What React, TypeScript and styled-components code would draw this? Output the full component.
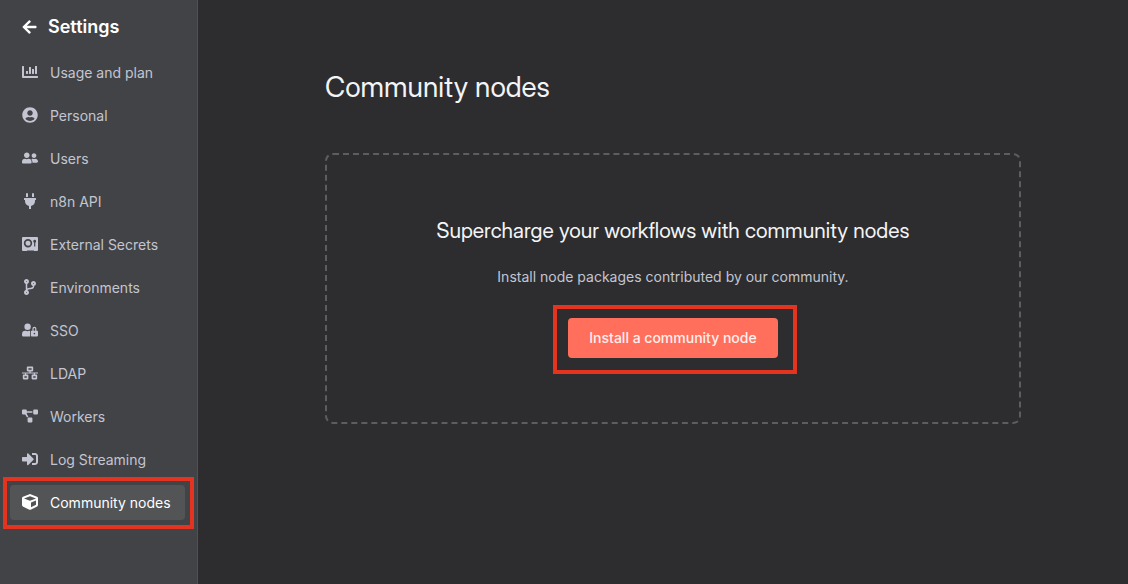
import React from "react";
import styled, { createGlobalStyle, css } from "styled-components";
import type { IconType } from "react-icons";
import {
  FaArrowLeft,
  FaChartBar,
  FaCodeBranch,
  FaCube,
  FaNetworkWired,
  FaPlug,
  FaProjectDiagram,
  FaSignInAlt,
  FaUserCircle,
  FaUserFriends,
  FaUserLock,
} from "react-icons/fa";

const GlobalStyle = createGlobalStyle`
  *, *::before, *::after { box-sizing: border-box; }
  body {
    margin: 0;
    background: #2d2d2f;
    font-family: Inter, "Liberation Sans", sans-serif;
    -webkit-font-smoothing: antialiased;
  }
`;

const Layout = styled.div`
  display: flex;
  min-height: 100vh;
`;

const Sidebar = styled.aside`
  flex: none;
  width: 198px;
  padding: 8px 12px 8px 10px;
  background: #424346;
  border-right: 1px solid #505154;
`;

const BackButton = styled.button`
  display: flex;
  align-items: center;
  gap: 11px;
  height: 38px;
  padding: 0 12px;
  border: 0;
  background: none;
  color: #fff;
  font: 600 18px/24px Inter, "Liberation Sans", sans-serif;
  cursor: pointer;

  svg {
    width: 15px;
    height: 16px;
  }
`;

const Menu = styled.ul`
  display: flex;
  flex-direction: column;
  gap: 8px;
  margin: 9px 0 0;
  padding: 0;
  list-style: none;
`;

const marker = css`
  content: "";
  position: absolute;
  border: 4px solid #e43420;
  pointer-events: none;
`;

const MenuLink = styled.a<{ $active?: boolean }>`
  position: relative;
  display: flex;
  align-items: center;
  gap: 12px;
  height: 35px;
  padding: 0 12px 1px;
  border-radius: 4px;
  background: ${(p) => (p.$active ? "#525456" : "transparent")};
  color: ${(p) => (p.$active ? "#fff" : "#c3c5d2")};
  font-size: 14px;
  line-height: 20px;
  white-space: nowrap;
  text-decoration: none;

  svg {
    flex: none;
    width: 16px;
    height: 16px;
  }

  ${(p) =>
    p.$active &&
    css`
      &::after {
        ${marker}
        inset: -8px -9px -9px -7px;
      }
    `}
`;

const MenuLabel = styled.span`
  padding-top: 2px;
`;

const Main = styled.main`
  flex: 1;
  min-width: 0;
  padding: 70px 107px 70px 127px;
`;

const PageTitle = styled.h1`
  margin: 0;
  color: #f4f4f6;
  font-family: "Inter Display", Inter, "Liberation Sans", sans-serif;
  font-size: 28px;
  font-weight: 400;
  line-height: 35px;
`;

const EmptyState = styled.section`
  display: flex;
  flex-direction: column;
  align-items: center;
  margin-top: 48px;
  padding: 62px 24px 64px;
  border: 2px dashed #5c5d60;
  border-radius: 8px;
  text-align: center;
`;

const EmptyTitle = styled.h2`
  margin: 0;
  color: #f4f4f6;
  font-family: "Inter Variable", InterVariable, "Inter Display", Inter, "Liberation Sans", sans-serif;
  font-size: 21px;
  font-weight: 400;
  line-height: 28px;
`;

const EmptyText = styled.p`
  margin: 22px 0 31px;
  color: #c3c5d2;
  font-size: 14px;
  line-height: 20px;
`;

const PrimaryButton = styled.button`
  position: relative;
  height: 40px;
  padding: 0 21px;
  border: 0;
  border-radius: 4px;
  background: #ff6f5c;
  color: #fff0ee;
  font: 500 14px/20px Inter, "Liberation Sans", sans-serif;
  cursor: pointer;

  &::after {
    ${marker}
    inset: -13px -19px -16px -15px;
  }
`;

const VaultIcon = () => (
  <svg viewBox="0 0 16 16" fill="none" aria-hidden="true">
    <path
      fill="currentColor"
      fillRule="evenodd"
      d="M1 1h14a1 1 0 0 1 1 1v12a1 1 0 0 1-1 1h-3v-.5H5v.5H1a1 1 0 0 1-1-1V2a1 1 0 0 1 1-1Zm5 2a4.200 4.200 0 1 0 0 8.400 4.200 4.200 0 0 0 0-8.400Zm0 1.700a2.500 2.500 0 1 1 0 5 2.500 2.500 0 0 1 0-5ZM12.700 3.800a1.500 1.500 0 0 0-.6 2.850V10.500h1.200V6.650A1.500 1.500 0 0 0 12.700 3.800Z"
    />
  </svg>
);

const items: { label: string; icon: IconType | React.FC; active?: boolean }[] = [
  { label: "Usage and plan", icon: FaChartBar },
  { label: "Personal", icon: FaUserCircle },
  { label: "Users", icon: FaUserFriends },
  { label: "n8n API", icon: FaPlug },
  { label: "External Secrets", icon: VaultIcon },
  { label: "Environments", icon: FaCodeBranch },
  { label: "SSO", icon: FaUserLock },
  { label: "LDAP", icon: FaNetworkWired },
  { label: "Workers", icon: FaProjectDiagram },
  { label: "Log Streaming", icon: FaSignInAlt },
  { label: "Community nodes", icon: FaCube, active: true },
];

export default function App() {
  return (
    <>
      <GlobalStyle />
      <Layout>
        <Sidebar>
          <BackButton type="button">
            <FaArrowLeft />
            Settings
          </BackButton>
          <nav>
            <Menu>
              {items.map(({ label, icon: Icon, active }) => (
                <li key={label}>
                  <MenuLink href="#" $active={active} aria-current={active ? "page" : undefined}>
                    <Icon />
                    <MenuLabel>{label}</MenuLabel>
                  </MenuLink>
                </li>
              ))}
            </Menu>
          </nav>
        </Sidebar>
        <Main>
          <PageTitle>Community nodes</PageTitle>
          <EmptyState>
            <EmptyTitle>Supercharge your workflows with community nodes</EmptyTitle>
            <EmptyText>Install node packages contributed by our community.</EmptyText>
            <PrimaryButton type="button">Install a community node</PrimaryButton>
          </EmptyState>
        </Main>
      </Layout>
    </>
  );
}
